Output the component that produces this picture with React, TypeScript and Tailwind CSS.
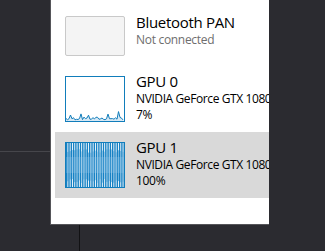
import React from "react";

const BLUE = "#117dbb";

function rand(seed: number) {
  let s = seed;
  return () => {
    s = (s * 9301 + 49297) % 233280;
    return s / 233280;
  };
}

function LowChart() {
  const r = rand(7);
  const pts: [number, number][] = [];
  for (let i = 0; i <= 58; i += 1.5) {
    let v = 1 + r() * 3;
    if (r() > 0.85) v += 3 + r() * 3;
    pts.push([i, 44 - v]);
  }
  const line = pts.map((p) => `${p[0].toFixed(1)},${p[1].toFixed(1)}`).join(" ");
  const area = `0,44 ${line} 58,44`;
  return (
    <svg width="58" height="44" viewBox="0 0 58 44" className="block">
      <polygon points={area} fill="#d7e8f4" />
      <polyline points={line} fill="none" stroke={BLUE} strokeWidth="1" />
    </svg>
  );
}

function FullChart() {
  const r = rand(13);
  const bars: React.ReactNode[] = [];
  const gaps: React.ReactNode[] = [];
  const period = 2.3;
  for (let i = 0; i * period < 58; i++) {
    const x = i * period;
    bars.push(<rect key={"b" + i} x={x} y={0} width={1.4} height={44} fill="#1681c4" />);
    const top = 6 + r() * 4;
    const bot = 36 + r() * 4;
    const op = 0.35 + r() * 0.45;
    gaps.push(
      <rect key={"g" + i} x={x + 1.4} y={top} width={period - 1.4} height={bot - top} fill="#3d97d2" opacity={op} />
    );
  }
  return (
    <svg width="58" height="44" viewBox="0 0 58 44" className="block">
      <rect x="0" y="0" width="58" height="44" fill="#ffffff" />
      {gaps}
      {bars}
      <rect x="0" y="14" width="58" height="16" fill="#9ccbea" opacity="0.25" />
    </svg>
  );
}

export default function App() {
  return (
    <div className="relative w-[325px] h-[251px] overflow-hidden bg-[#2b2b30] font-['Open_Sans',sans-serif]">
      <div className="absolute left-0 top-[151px] h-px w-[50px] bg-[#46464b]" />
      <div className="absolute left-[79px] top-[225px] h-[26px] w-px bg-[#121214]" />
      <div className="relative ml-[50px] h-[225px] w-[219px] overflow-hidden border-b border-l border-[#555559] bg-white pl-[4px]">
        <div className="flex h-[66px] items-start whitespace-nowrap pl-[10px]">
          <div className="mt-[16px] h-[40px] w-[60px] shrink-0 rounded-[2px] border border-[#c9c9c9] bg-[#f4f4f4]" />
          <div className="ml-[11px] mt-[13px] flex flex-col">
            <span className="text-[15px] leading-[19px] tracking-[-0.3px] text-black">Bluetooth PAN</span>
            <span className="text-[12px] leading-[16px] tracking-[-0.3px] text-[#6e6e6e]">Not connected</span>
          </div>
        </div>
        <div className="flex h-[66px] items-start whitespace-nowrap pl-[10px]">
          <div className="mt-[10px] h-[46px] w-[60px] shrink-0 border border-[#117dbb] bg-white">
            <LowChart />
          </div>
          <div className="ml-[11px] mt-[6px] flex flex-col">
            <span className="text-[15px] leading-[19px] tracking-[-0.3px] text-black">GPU 0</span>
            <span className="text-[12px] leading-[16px] tracking-[-0.4px] text-black">NVIDIA GeForce GTX 1080</span>
            <span className="text-[12px] leading-[16px] tracking-[-0.3px] text-black">7%</span>
          </div>
        </div>
        <div className="flex h-[66px] items-start whitespace-nowrap bg-[#d9d9d9] pl-[10px]">
          <div className="mt-[10px] h-[46px] w-[60px] shrink-0 border border-[#117dbb] bg-white">
            <FullChart />
          </div>
          <div className="ml-[11px] mt-[6px] flex flex-col">
            <span className="text-[15px] leading-[19px] tracking-[-0.3px] text-black">GPU 1</span>
            <span className="text-[12px] leading-[16px] tracking-[-0.4px] text-black">NVIDIA GeForce GTX 1080</span>
            <span className="text-[12px] leading-[16px] tracking-[-0.3px] text-black">100%</span>
          </div>
        </div>
      </div>
    </div>
  );
}
